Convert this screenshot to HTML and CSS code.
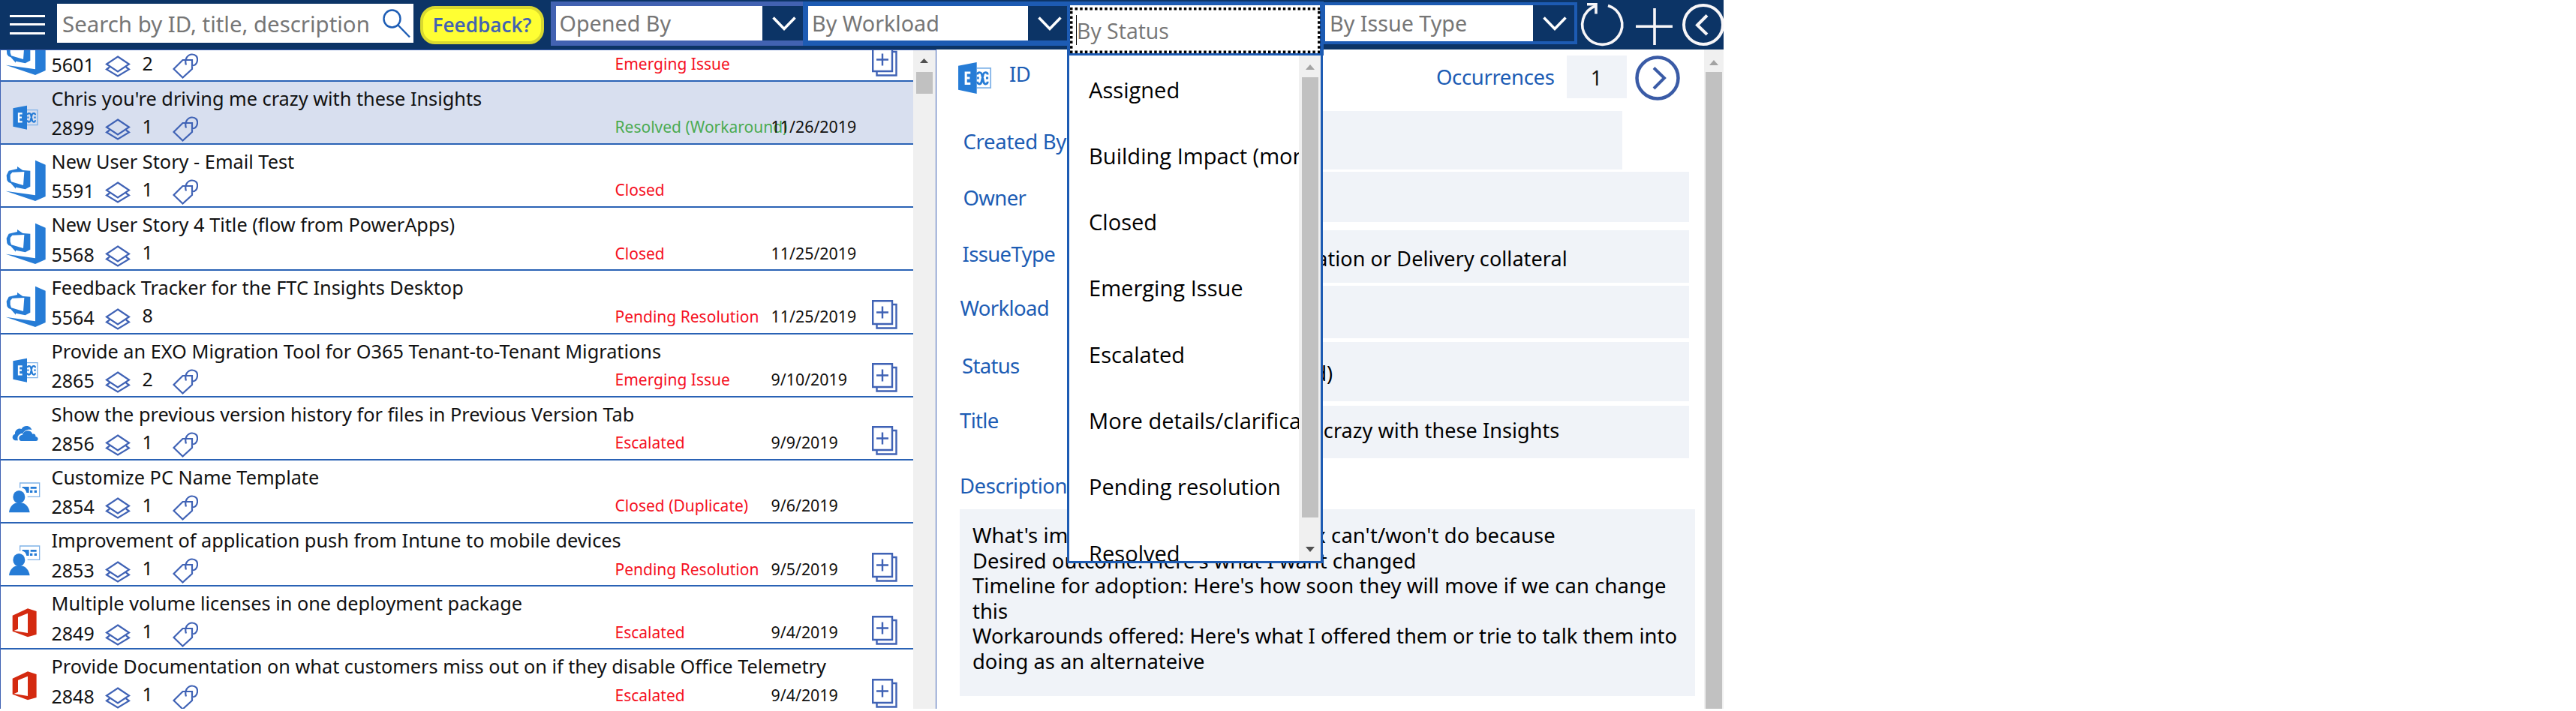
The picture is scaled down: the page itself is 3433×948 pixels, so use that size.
FILE: index.html
```html
<!DOCTYPE html>
<html lang="en">
<head>
<meta charset="utf-8">
<title>Insights</title>
<link rel="stylesheet" href="styles.css">
</head>
<body>
<svg class="defs" width="0" height="0">
  <symbol id="devops" viewBox="20 18 164 168"><path fill="#267cd6" d="M140 20L181 38V165L140 183L22 143L140 160Z"/><path fill="#267cd6" fill-rule="evenodd" d="M25 80L34 62L68 54V45L90 60L120 62V125L100 136L62 128V134L42 112L33 108L27 100ZM40 78V94L44 106L92 120L96 66L48 68Z"/></symbol>
  <symbol id="exchange" viewBox="50 305 104 100"><path fill="none" stroke="#7fb2e8" stroke-width="4" d="M107 325H149V385H107"/><path fill="none" stroke="#267cd6" stroke-width="6.500" d="M109 345C109 337 119 336 122 343L128 368C131 376 140 374 140 366M140 345C140 337 130 336 127 343L121 368C118 376 109 374 109 366M108 355H114M135 355H142"/><path fill="#267cd6" d="M51 318L107 307V403L51 391Z"/><path fill="none" stroke="#fff" stroke-width="7" d="M88 339H74V372H88M74 355H86"/></symbol>
  <symbol id="onedrive" viewBox="48 574 106 64"><path fill="#267cd6" d="M72 635H60C47 632 46 614 60 609C58 593 75 583 86 589C94 572 122 573 127 593C110 588 96 596 92 606C76 606 66 620 72 635Z"/><path fill="#267cd6" d="M86 637C72 636 72 614 90 612C94 592 124 590 130 609C138 606 144 612 142 619C156 621 154 637 144 637Z"/></symbol>
  <symbol id="intune" viewBox="36 802 126 122"><path fill="none" stroke="#7fb2e8" stroke-width="4" d="M80 825V805H158V860H110"/><path fill="#267cd6" d="M89 820H116V844H106C104 832 98 826 89 825ZM122 820H146V828H122ZM120 834H130V844H120ZM137 834H147V844H137Z"/><ellipse cx="76" cy="861" rx="24" ry="26" fill="#267cd6"/><path fill="#267cd6" d="M36 923C38 903 48 890 62 885H92C106 890 116 903 119 923Z"/></symbol>
  <symbol id="office" viewBox="50 1306 100 116"><path fill="#d42a10" fill-rule="evenodd" d="M52 1335L113 1307L148 1318V1411L113 1421L52 1398ZM74 1342V1389L58 1396L113 1405V1326Z"/></symbol>
  <symbol id="layers" viewBox="0 0 34 29"><path fill="none" stroke="#3f62b5" stroke-width="2.200" d="M17 1.5L32 11.5L17 21.5L2 11.5ZM6 15.5L2 18.5L17 27.5L32 18.5L28 15.5"/></symbol>
  <symbol id="tag" viewBox="0 0 34 34"><path fill="none" stroke="#3f62b5" stroke-width="2.200" d="M1.5 21L13.5 9H26V21L13.5 32.5ZM18 15.5C15.500 8 20 1.500 26 1.500C31 1.500 33.500 5 33 9.500C32.500 14 30 16.500 25.500 16.500"/></symbol>
  <symbol id="docs" viewBox="0 0 34 39"><path fill="none" stroke="#3f62b5" stroke-width="2.400" d="M1.200 1.200H27V32H1.200ZM27 6H32.500V37.500H6.500V32M14 8.500V24.500M6 16.500H22"/></symbol>
  <symbol id="chev" viewBox="0 0 32 20"><path fill="none" stroke="#fff" stroke-width="3.600" d="M1.500 1.500L16 16.500L30.500 1.500"/></symbol>
</svg>

<div class="app">
  <header class="bar">
    <div class="burger"><i></i><i></i><i></i></div>
    <div class="search"><span>Search by ID, title, description</span>
      <svg width="38" height="40" viewBox="0 0 38 40"><g fill="none" stroke="#1c5cb4" stroke-width="2.400"><ellipse cx="12.500" cy="13" rx="11" ry="11.500"/><path d="M20 21L36 37.500"/></g></svg>
    </div>
    <button class="feedback">Feedback?</button>
    <div class="combo opened"><span class="ph">Opened By</span><b><svg width="32" height="20"><use href="#chev"/></svg></b></div>
    <div class="combo workload"><span class="ph">By Workload</span><b><svg width="32" height="20"><use href="#chev"/></svg></b></div>
    <div class="status">
      <div class="status-input">
        <svg class="dots" width="334" height="61"><path fill="none" stroke="#000" stroke-width="3.500" stroke-dasharray="3.500 3.100" d="M0 1.750H333M0 59.200H333M1.750 5V57M331.800 5V57"/></svg>
        <span>By Status</span>
      </div>
      <div class="menu">
        <ul><li>Assigned</li><li>Building Impact (more</li><li>Closed</li><li>Emerging Issue</li><li>Escalated</li><li>More details/clarification</li><li>Pending resolution</li><li>Resolved</li></ul>
        <div class="sb menu-sb"><svg width="12" height="7"><path fill="#a3a3a3" d="M0 7L6 0L12 7Z"/></svg><i></i><svg width="12" height="7"><path fill="#505050" d="M0 0L6 7L12 0Z"/></svg></div>
      </div>
    </div>
    <div class="combo issue"><span class="ph">By Issue Type</span><b><svg width="32" height="20"><use href="#chev"/></svg></b></div>
    <svg class="refresh" width="57" height="57" viewBox="0 0 57 57"><g fill="none" stroke="#f8f6f8" stroke-width="3.600"><path d="M36 3.500A26.500 26.500 0 1 1 19 4"/><path d="M8 1.800H20V14.500"/></g></svg>
    <svg class="plus" width="50" height="50"><path fill="none" stroke="#f8f6f8" stroke-width="3.600" d="M25 0V49M0 24.300H49"/></svg>
    <svg class="back" width="56" height="56"><g fill="none" stroke="#f8f6f8" stroke-width="4"><circle cx="28" cy="28" r="26"/><path d="M33 15.500L20 28.500L33 41"/></g></svg>
  </header>

  <main class="body">
    <section class="list">
      <div class="rows" id="rows"></div>
      <div class="sb list-sb"><svg width="11" height="6"><path fill="#505050" d="M0 6L5.500 0L11 6Z"/></svg><i></i></div>
    </section>
    <section class="detail">
      <div class="form">
        <div class="head">
          <svg class="ex" width="47" height="44"><use href="#exchange"/></svg>
          <label class="id">ID</label>
          <label class="occ">Occurrences</label>
          <div class="num">1</div>
          <svg class="next" width="60" height="60"><g fill="none" stroke="#3a5ba6"><circle cx="30" cy="30" r="27.500" stroke-width="4.500"/><path stroke-width="4" d="M25 16.500L39 30L25 44"/></g></svg>
        </div>
        <div class="field f1"><label>Created By</label><div></div></div>
        <div class="field f2"><label>Owner</label><div></div></div>
        <div class="field f3"><label>IssueType</label><div>Documentation or Delivery collateral</div></div>
        <div class="field f4"><label>Workload</label><div></div></div>
        <div class="field f5"><label>Status</label><div>Resolved (Workaround)</div></div>
        <div class="field f6"><label>Title</label><div>Chris you're driving me crazy with these Insights</div></div>
        <label class="desc-label">Description</label>
        <div class="desc"><span class="wide">What's impacted: Here's what the fix can't/won't do because</span><br>Desired outcome: Here's what I want changed<br><span class="wide">Timeline for adoption: Here's how soon they will move if we can change</span><br>this<br>Workarounds offered: Here's what I offered them or trie to talk them into<br>doing as an alternateive</div>
      </div>
      <div class="sb detail-sb"><svg width="12" height="7"><path fill="#a3a3a3" d="M0 7L6 0L12 7Z"/></svg><i></i></div>
    </section>
  </main>
</div>
<script src="rows.js"></script>
</body>
</html>
```
FILE: styles.css
```css
* { box-sizing: border-box; }
body { margin: 0; background: #fff; font-family: "Noto Sans", sans-serif; color: #111; }
svg { display: block; flex: none; overflow: visible; }
.defs { position: absolute; }
.app { width: 2297px; height: 945px; overflow: hidden; }

.bar { display: flex; align-items: flex-start; height: 66px; background: #0c3466; position: relative; z-index: 2; }
.bar > * { flex: none; }
.burger { width: 47px; margin: 19.500px 0 0 13px; display: grid; gap: 8.700px; }
.burger i { height: 3px; background: #fff; }
.search { display: flex; justify-content: space-between; width: 475px; height: 52px; margin: 5px 0 0 15.500px; padding: 0 3px 0 7.500px; background: #fff; color: #767676; font-size: 29.400px; line-height: 54.500px; white-space: nowrap; }
.search svg { margin-top: 6.500px; }
.feedback { width: 165px; height: 51px; margin: 8px 0 0 9.500px; padding: 0; border: 4px solid #d9d930; border-radius: 20px; background: #ffff33; color: #4262b2; font: 600 26.200px/43px "Open Sans", sans-serif; }
.combo { display: flex; height: 59px; margin-top: 2px; border: solid #1d5bb3; border-width: 6.500px 0 7px 7px; white-space: nowrap; }
.ph { flex: 1; background: #fff; color: #767676; font-size: 28.700px; line-height: 46px; padding-left: 5px; }
.combo b { width: 54px; background: #0c3466; padding: 13.500px 0 0 13px; }
.opened { width: 336.500px; margin-left: 8.500px; border-color: #4262b2; }
.workload { width: 352px; }
.workload b { width: 52px; }
.issue { width: 338px; height: 56px; margin-top: 3px; border-width: 4px 4px 4px 2px; }
.issue .ph { padding-left: 6px; line-height: 47px; }
.issue b { width: 55px; padding-top: 15px; }
.refresh { margin: 4px 0 0 5px; }
.plus { margin: 11px 0 0 16px; }
.back { margin: 5px 0 0 12px; }

.status { position: relative; width: 342px; height: 72px; margin-top: 2px; background: #1d5bb3; padding: 5px 5px 3px 3.500px; z-index: 3; font-family: "Open Sans", sans-serif; }
.status-input { position: relative; height: 64px; background: #fff; color: #767676; font-size: 28.500px; line-height: 40px; padding: 13px 0 0 8.500px; }
.status-input span { display: block; border-left: 1.500px solid #000; line-height: 40px; height: 40px; padding-top: 1px; }
.dots { position: absolute; left: 0; top: 3px; }
.menu { position: absolute; left: 0; top: 72px; width: 341px; height: 677px; background: #fff; border: solid #1d5bb3; border-width: 0 3.500px 3px 3px; display: flex; overflow: hidden; }
.menu ul { flex: 1; margin: 0; padding: 1.500px 0 0 26px; list-style: none; overflow: hidden; white-space: nowrap; font-size: 29.100px; color: #000; }
.menu li { height: 88.300px; line-height: 88px; }
.sb { display: flex; flex-direction: column; align-items: center; background: #f0f0f0; }
.sb i { background: #c1c1c1; }
.menu-sb { width: 29px; padding-top: 12px; }
.menu-sb i { width: 22px; height: 587px; margin: 10px 0 39px; }

.body { display: flex; height: 879px; }
.list { display: flex; width: 1247.500px; flex: none; border: solid #3f62b4; border-width: 1.300px 1.500px 0 1.500px; overflow: hidden; }
.rows { flex: 1; margin-top: -42.400px; }
.row { display: flex; height: 84.200px; border-bottom: 2px solid #2a62b5; }
.row.sel { background: #d8dfef; }
.pic { width: 67.500px; flex: none; }
.devops { width: 54.700px; height: 56px; margin: 19.900px 0 0 5.500px; }
.exchange { width: 34.700px; height: 33.300px; margin: 31.300px 0 0 15.500px; }
.onedrive { width: 35.300px; height: 21.300px; margin: 36.800px 0 0 14.500px; }
.intune { width: 42px; height: 40.700px; margin: 28.700px 0 0 10.500px; }
.office { width: 33.300px; height: 38.700px; margin: 28.500px 0 0 15px; }
.info { white-space: nowrap; color: #111; }
.title { margin-top: 4px; font-size: 25.300px; line-height: 36px; }
.meta { display: grid; grid-template-columns: 71.500px 49.500px 40px 590px 208px 134px 40px; align-items: start; line-height: 36px; font-size: 25px; }
.num-id { margin-top: 3.500px; }
.cnt { margin-top: 1px; }
.meta .lay { margin-top: 9.500px; }
.meta .tg { margin-top: 6.300px; }
.st { font-size: 21px; margin-top: 2.500px; color: #f5101f; }
.st.ok { color: #4bab52; }
.dt { font-size: 21.400px; margin-top: 2.500px; }
.dc { margin-top: -1.500px; }
.list-sb { width: 29.500px; padding-top: 11px; }
.list-sb i { width: 22px; height: 29px; margin-top: 12px; }

.detail { flex: 1; display: flex; overflow: hidden; }
.form { flex: 1; padding-left: 29.500px; }
label { color: #1c5cb4; font-size: 27.500px; letter-spacing: -.650px; line-height: 36px; white-space: nowrap; }
.head { display: flex; height: 82px; align-items: flex-start; }
.ex { margin: 16px 0 0 -1px; }
.id { margin: 14.800px 0 0 22px; }
.occ { margin: 19px 16px 0 auto; letter-spacing: -.350px; }
.num { width: 80px; height: 57px; margin-top: 8px; background: #f0f3f8; text-align: center; font-size: 27px; line-height: 59px; }
.next { margin: 7.500px 32px 0 11.500px; }
.field { display: flex; align-items: flex-start; }
.field label { width: 153px; }
.field div { width: 820.500px; background: #f0f3f8; font-size: 27px; line-height: 36px; padding-left: 32px; white-space: nowrap; letter-spacing: .080px; color: #000; }
.f1 label { padding: 22.800px 0 0 6.500px; letter-spacing: -.300px; }
.f1 div { width: 731.500px; height: 77.500px; }
.f2 { margin-top: 3.500px; }
.f2 label { padding: 16.500px 0 0 6.500px; }
.f2 div { height: 67px; }
.f3 { margin-top: 10.500px; }
.f3 label { padding: 14.300px 0 0 5.500px; }
.f3 div { height: 70.500px; padding: 20.700px 0 0 191px; }
.f4 { margin-top: 4px; }
.f4 label { padding: 11.800px 0 0 2.500px; }
.f4 div { height: 70px; }
.f5 { margin-top: 5px; }
.f5 label { padding: 13.500px 0 0 5px; }
.f5 div { height: 79px; padding: 24.200px 0 0 49px; }
.f6 { margin-top: 5.500px; }
.f6 label { padding: 2.500px 0 0 2px; }
.f6 div { height: 70.500px; padding-top: 15.500px; padding-left: 32px; }
.desc-label { display: block; margin: 18.800px 0 0 2px; letter-spacing: -.450px; }
.desc { width: 980px; height: 249px; margin: 13px 0 0 2px; padding: 18.500px 0 0 17px; background: #f0f3f8; color: #000; font-size: 27.400px; line-height: 33.500px; white-space: nowrap; }
.wide { letter-spacing: .110px; }
.detail-sb { width: 26px; padding-top: 14px; }
.detail-sb i { width: 22px; height: 860px; flex: none; margin-top: 9px; }
```
FILE: rows.js
```js
// [icon, title, id, count, has tag, status, date, has docs, modifier]
const data = [
  ["devops", "", 5601, 2, 1, "Emerging Issue", "", 1],
  ["exchange", "Chris you're driving me crazy with these Insights", 2899, 1, 1, "Resolved (Workaround)", "11/26/2019", 0, "sel"],
  ["devops", "New User Story - Email Test", 5591, 1, 1, "Closed", "", 0],
  ["devops", "New User Story 4 Title (flow from PowerApps)", 5568, 1, 0, "Closed", "11/25/2019", 0],
  ["devops", "Feedback Tracker for the FTC Insights Desktop", 5564, 8, 0, "Pending Resolution", "11/25/2019", 1],
  ["exchange", "Provide an EXO Migration Tool for O365 Tenant-to-Tenant Migrations", 2865, 2, 1, "Emerging Issue", "9/10/2019", 1],
  ["onedrive", "Show the previous version history for files in Previous Version Tab", 2856, 1, 1, "Escalated", "9/9/2019", 1],
  ["intune", "Customize PC Name Template", 2854, 1, 1, "Closed (Duplicate)", "9/6/2019", 0],
  ["intune", "Improvement of application push from Intune to mobile devices", 2853, 1, 1, "Pending Resolution", "9/5/2019", 1],
  ["office", "Multiple volume licenses in one deployment package", 2849, 1, 1, "Escalated", "9/4/2019", 1],
  ["office", "Provide Documentation on what customers miss out on if they disable Office Telemetry", 2848, 1, 1, "Escalated", "9/4/2019", 1]
];
const icon = (id, cls, w, h) => `<svg class="${cls}" width="${w}" height="${h}"><use href="#${id}"/></svg>`;
document.getElementById("rows").innerHTML = data.map(([ic, title, id, n, tag, st, date, docs, mod]) => `
  <div class="row ${mod || ""}">
    <div class="pic"><svg class="${ic}"><use href="#${ic}"/></svg></div>
    <div class="info">
      <div class="title">${title || "&nbsp;"}</div>
      <div class="meta">
        <span class="num-id">${id}</span>${icon("layers", "lay", 34, 29)}<span class="cnt">${n}</span>
        ${tag ? icon("tag", "tg", 34, 34) : "<span></span>"}
        <span class="st ${mod ? "ok" : ""}">${st}</span><span class="dt">${date}</span>
        ${docs ? icon("docs", "dc", 34, 39) : "<span></span>"}
      </div>
    </div>
  </div>`).join("");
```
